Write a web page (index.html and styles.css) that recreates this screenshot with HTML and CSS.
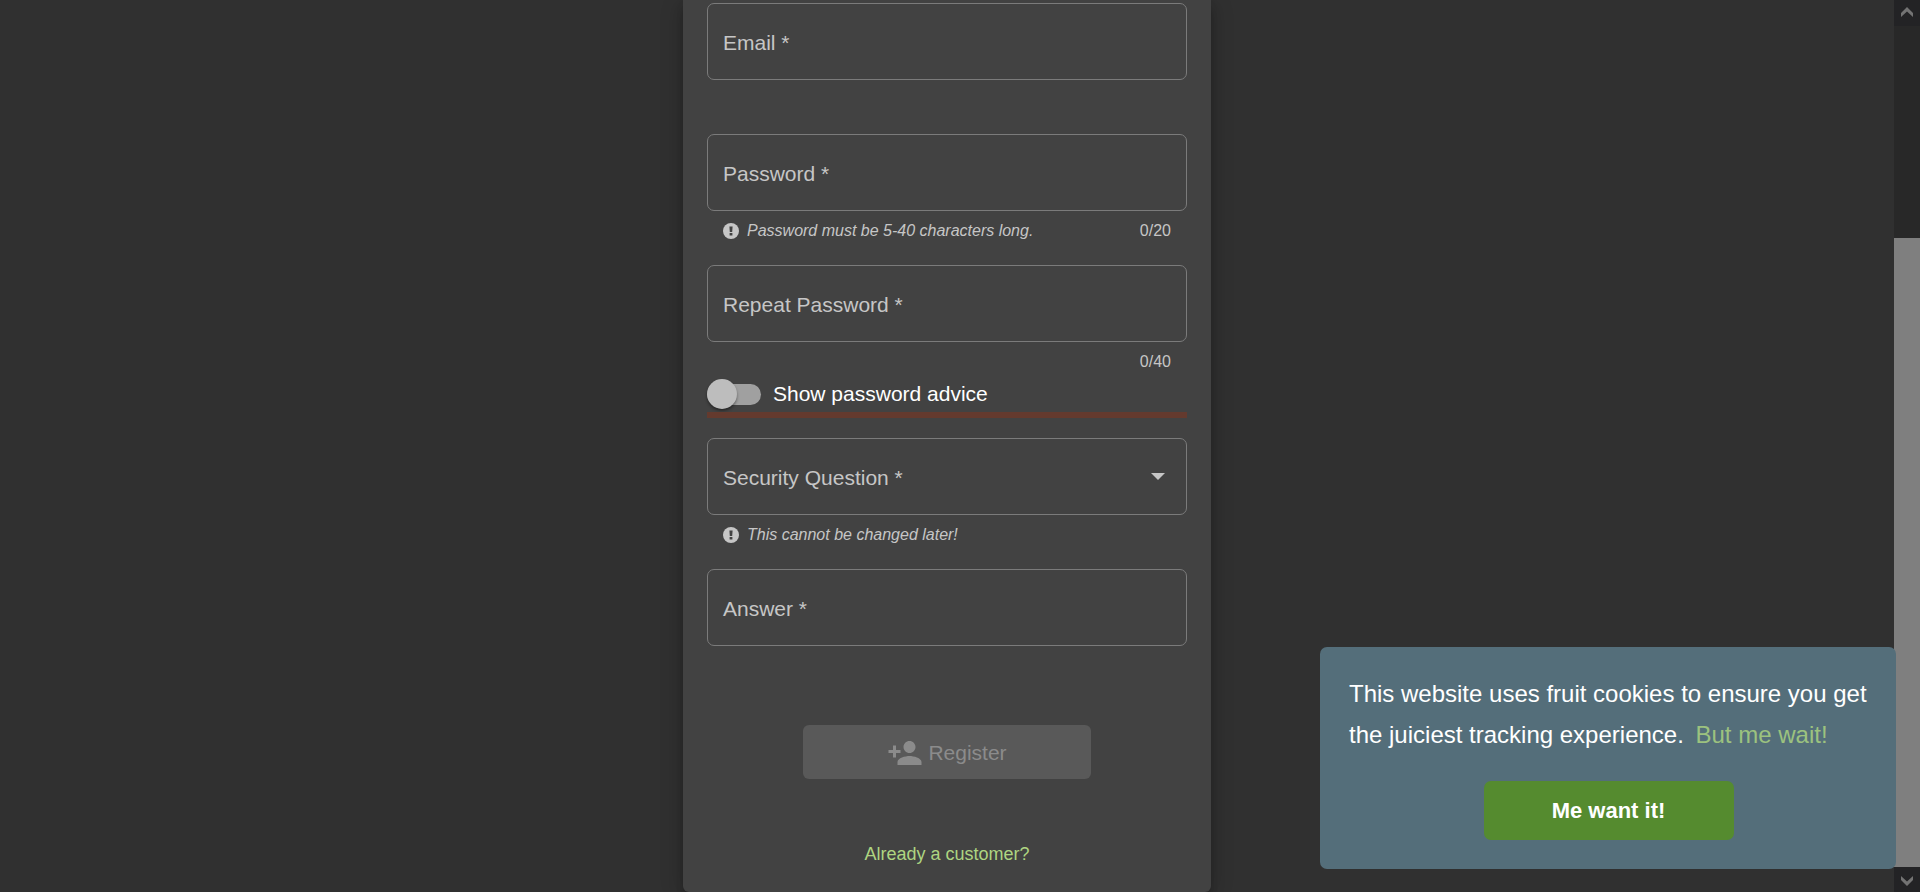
FILE: index.html
```html
<!DOCTYPE html>
<html lang="en">
<head>
<meta charset="utf-8">
<meta name="viewport" content="width=device-width, initial-scale=1">
<title>User Registration</title>
<link rel="stylesheet" href="styles.css">
</head>
<body>
<div class="page">
  <main class="content">
    <form class="card">
      <div class="field">
        <div class="outline">
          <label class="label" for="email">Email *</label>
          <input class="control" id="email" type="email">
        </div>
        <div class="subscript"></div>
      </div>
      <div class="field">
        <div class="outline">
          <label class="label" for="password">Password *</label>
          <input class="control" id="password" type="password">
        </div>
        <div class="subscript">
          <svg class="hint-icon" viewBox="0 0 16 16" aria-hidden="true"><circle cx="8" cy="8" r="8"/><path class="mark" d="M6.4 3.600h3.200L9.200 9H6.800zM6.600 10h2.800v2.400H6.600z"/></svg>
          <em class="hint">Password must be 5-40 characters long.</em>
          <span class="count">0/20</span>
        </div>
      </div>
      <div class="field last">
        <div class="outline">
          <label class="label" for="repeat">Repeat Password *</label>
          <input class="control" id="repeat" type="password">
        </div>
        <div class="subscript"><span class="count">0/40</span></div>
      </div>
      <div class="toggle-row">
        <input class="toggle" id="advice" type="checkbox" role="switch">
        <label for="advice">Show password advice</label>
      </div>
      <div class="strength"></div>
      <div class="field">
        <div class="outline">
          <label class="label" for="question">Security Question *</label>
          <select class="control" id="question"><option value=""></option></select>
          <svg class="arrow" viewBox="0 0 14 7" aria-hidden="true"><path d="M0 0h14L7 7z"/></svg>
        </div>
        <div class="subscript">
          <svg class="hint-icon" viewBox="0 0 16 16" aria-hidden="true"><circle cx="8" cy="8" r="8"/><path class="mark" d="M6.4 3.600h3.200L9.200 9H6.800zM6.600 10h2.800v2.400H6.600z"/></svg>
          <em class="hint">This cannot be changed later!</em>
        </div>
      </div>
      <div class="field last">
        <div class="outline">
          <label class="label" for="answer">Answer *</label>
          <input class="control" id="answer" type="text">
        </div>
        <div class="subscript"></div>
      </div>
      <button class="register" type="submit" disabled>
        <svg class="person" viewBox="0 0 24 24" aria-hidden="true"><path d="M15 12c2.210 0 4-1.790 4-4s-1.790-4-4-4-4 1.790-4 4 1.790 4 4 4zm-9-2V7H4v3H1v2h3v3h2v-3h3v-2H6zm9 4c-2.670 0-8 1.340-8 4v2h16v-2c0-2.660-5.330-4-8-4z"/></svg>
        <span>Register</span>
      </button>
      <a class="login" href="#">Already a customer?</a>
    </form>
  </main>
  <div class="scrollbar" aria-hidden="true">
    <div class="step up"><svg viewBox="0 0 12 10"><path d="M0 6l6-6 6 6v4L6 4.500 0 10z"/></svg></div>
    <div class="track"></div>
    <div class="thumb"></div>
    <div class="step down"><svg viewBox="0 0 12 10"><path d="M0 4l6 6 6-6V0L6 5.500 0 0z"/></svg></div>
  </div>
</div>
<section class="cookies" aria-label="Cookie consent">
  <p class="message">This website uses fruit cookies to ensure you get the juiciest tracking experience. <a class="wait" href="#">But me wait!</a></p>
  <button class="accept" type="button">Me want it!</button>
</section>
</body>
</html>
```

FILE: styles.css
```css
* { box-sizing: border-box; }

body {
  margin: 0;
  background: #303030;
  color: #fff;
  font-family: "Liberation Sans", Arial, sans-serif;
  font-size: 21px;
}

button, input, select { font: inherit; }

a { text-decoration: none; }

.page { display: flex; min-height: 100vh; }

.content {
  flex: 1;
  display: flex;
  justify-content: center;
  align-items: flex-start;
}

.card {
  display: flex;
  flex-direction: column;
  width: 100%;
  max-width: 528px;
  padding: 3px 24px 26px;
  background: #424242;
  border-radius: 0 0 6px 6px;
  box-shadow: 0 5px 8px -2px rgba(0, 0, 0, .2), 0 9px 15px rgba(0, 0, 0, .14), 0 2px 27px rgba(0, 0, 0, .12);
}

.field { margin-bottom: 18px; }
.field.last { margin-bottom: 0; }

.outline {
  display: grid;
  grid-template-columns: 1fr auto;
  align-items: center;
  height: 77px;
  border: 1px solid #7b7b7b;
  border-radius: 7px;
}

.label {
  grid-area: 1 / 1;
  padding: 2px 15px 0;
  color: #c6c6c6;
  pointer-events: none;
  z-index: 1;
}

.control {
  grid-area: 1 / 1 / 2 / 3;
  width: 100%;
  height: 100%;
  padding: 0 15px;
  border: 0;
  outline: 0;
  background: transparent;
  color: #fff;
  appearance: none;
}

.arrow {
  grid-area: 1 / 2;
  width: 14px;
  height: 7px;
  margin-right: 21px;
  fill: #c6c6c6;
  pointer-events: none;
}

.subscript {
  display: flex;
  align-items: center;
  height: 36px;
  padding: 4px 16px 0;
  color: #c6c6c6;
  font-size: 16px;
}

.hint-icon { width: 16px; height: 16px; margin-right: 8px; fill: #c6c6c6; }
.mark { fill: #424242; }
.count { margin-left: auto; }

.toggle-row {
  display: flex;
  align-items: center;
  gap: 12px;
  height: 32px;
  margin-bottom: 2px;
}

.toggle {
  display: flex;
  align-items: center;
  width: 54px;
  height: 21px;
  margin: 0;
  border-radius: 11px;
  background: #a0a0a0;
  appearance: none;
}

.toggle::before {
  content: "";
  flex: none;
  width: 30px;
  height: 30px;
  border-radius: 50%;
  background: #bdbdbd;
  box-shadow: 0 2px 3px rgba(0, 0, 0, .4);
}

.toggle:checked { justify-content: flex-end; }

.strength { height: 6px; margin-bottom: 20px; background: #643a2e; }

.register {
  display: flex;
  align-items: center;
  justify-content: center;
  gap: 5px;
  width: 60%;
  height: 54px;
  margin: 43px auto 63px;
  padding: 2px 6px 0;
  border: 0;
  border-radius: 6px;
  background: #595959;
  color: #8b8b8b;
}

.person { width: 36px; height: 36px; fill: currentColor; }

.login {
  align-self: center;
  color: #aed581;
  font-size: 18px;
  line-height: 24px;
}

.scrollbar {
  position: sticky;
  top: 0;
  display: flex;
  flex-direction: column;
  width: 26px;
  height: 100vh;
  background: #282828;
}

.step {
  display: flex;
  align-items: center;
  justify-content: center;
  background: #232325;
}

.up { height: 26px; padding-bottom: 2px; }
.down { height: 25px; padding-top: 2px; }

.step svg { width: 12px; height: 10px; fill: #737373; }
.track { flex: 212; }
.thumb { flex: 629; background: #7f7f7f; }

.cookies {
  position: fixed;
  right: 24px;
  bottom: 23px;
  display: flex;
  flex-direction: column;
  align-items: center;
  gap: 26px;
  width: 576px;
  padding: 26px 28px 29px 29px;
  border-radius: 7px;
  background: #546e7a;
}

.message { margin: 0; font-size: 24px; line-height: 41px; }
.wait { margin-left: 5px; color: #9cc27f; }

.accept {
  width: 250px;
  height: 59px;
  border: 0;
  border-radius: 7px;
  background: #558b2f;
  color: #fff;
  font-size: 22px;
  font-weight: bold;
}
```
